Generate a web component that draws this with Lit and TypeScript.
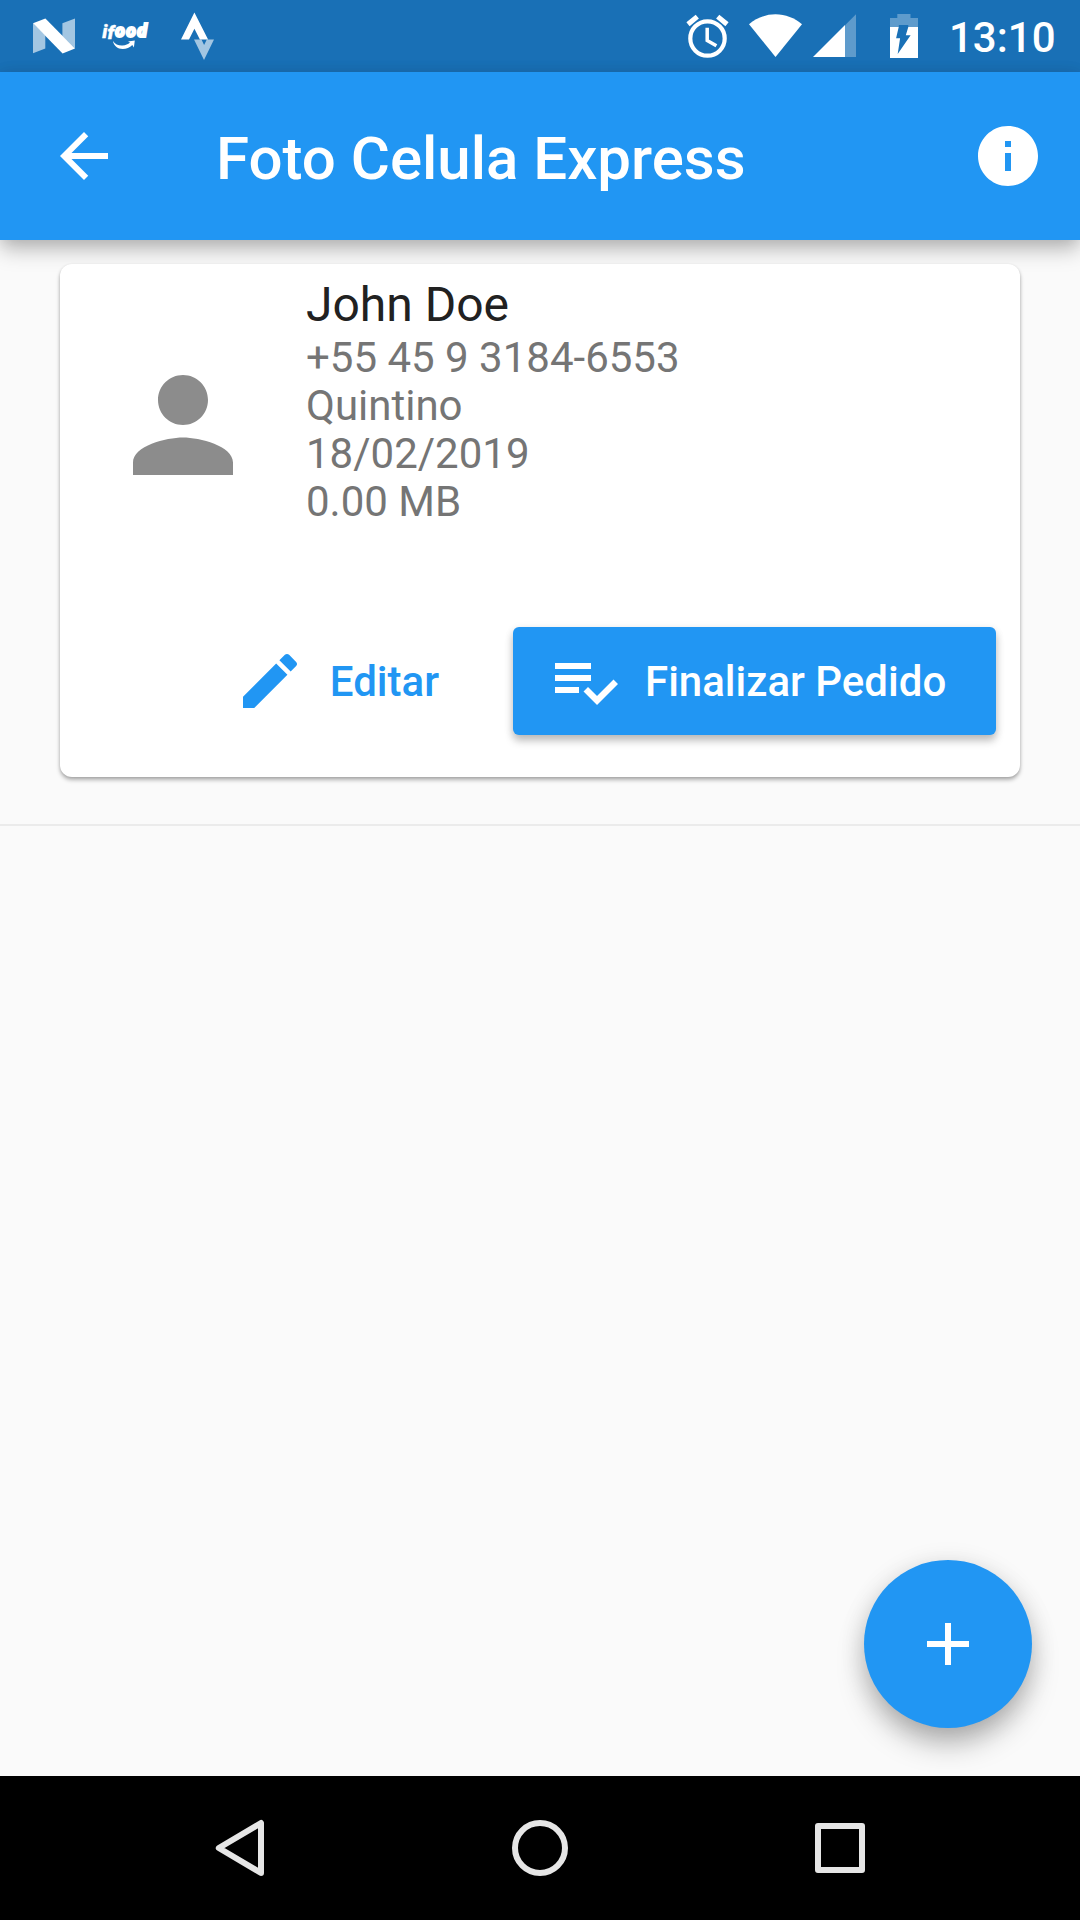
import { LitElement, html, css, svg } from "lit";
import { customElement, property } from "lit/decorators.js";

const paths: Record<string, string> = {
  back: "M20 11H7.83l5.59-5.59L12 4l-8 8 8 8 1.41-1.41L7.83 13H20v-2z",
  info: "M12 2C6.48 2 2 6.48 2 12s4.48 10 10 10 10-4.48 10-10S17.52 2 12 2zm1 15h-2v-6h2v6zm0-8h-2V7h2v2z",
  person: "M12 12c2.21 0 4-1.79 4-4s-1.79-4-4-4-4 1.79-4 4 1.79 4 4 4zm0 2c-2.67 0-8 1.34-8 4v2h16v-2c0-2.66-5.33-4-8-4z",
  edit: "M3 17.25V21h3.75L17.81 9.94l-3.75-3.75L3 17.25zM20.71 7.04c.39-.39.39-1.02 0-1.41l-2.34-2.34c-.39-.39-1.02-.39-1.41 0l-1.83 1.83 3.75 3.75 1.83-1.83z",
  check: "M14 10H2v2h12v-2zm0-4H2v2h12V6zM2 16h8v-2H2v2zm19.5-4.5L23 13l-6.99 7-4.51-4.5L13 14l3.01 3 5.49-5.5z",
  add: "M19 13h-6v6h-2v-6H5v-2h6V5h2v6h6v2z",
};

@customElement("md-icon")
export class MdIcon extends LitElement {
  @property() name = "";
  static styles = css`
    :host { display: block; width: 72px; height: 72px; flex: none; }
    .icon { display: block; width: 100%; height: 100%; fill: currentColor; }
  `;
  render() {
    return html`<svg class="icon" viewBox="0 0 24 24">${svg`<path d=${paths[this.name]}></path>`}</svg>`;
  }
}

@customElement("status-bar")
export class StatusBar extends LitElement {
  static styles = css`
    :host { display: flex; height: 72px; padding: 0 24.5px 0 32px; background: #1970b6; color: #fff; align-items: center; box-sizing: border-box; }
    .group { display: flex; align-items: center; }
    .left { gap: 24px; flex: 1; }
    .glyph { display: block; height: 72px; fill: #fff; flex: none; }
    .soft { fill-opacity: 0.6; }
    .faint { fill-opacity: 0.3; }
    .line { fill: none; stroke: #fff; }
    .brand { font: italic 900 20px Roboto, sans-serif; }
    .thin { font-weight: 900; font-size: 19px; stroke: #fff; stroke-width: 0.4px; }
    .round { stroke: #fff; stroke-width: 2px; font-size: 17.5px; }
    .wifi { margin-left: 19px; }
    .cell { margin-left: 10px; }
    .battery { margin-left: 33px; }
    .clock { font: 500 42px/72px Roboto, sans-serif; margin-left: 30.5px; height: 72px; padding-top: 2px; box-sizing: border-box; white-space: nowrap; }
  `;
  render() {
    return html`
      <div class="group left">
        <svg class="glyph" width="44" height="72" viewBox="32 0 44 72">
          <path class="soft" d="M33 23.3l12.3 12.3v12.9L33 53.3zM62.4 23.2L75 18.4v30L62.4 36z"></path>
          <path d="M33 23.2l12.400-4.800L75 48.400l-12.400 5z"></path>
        </svg>
        <svg class="glyph" width="56" height="72" viewBox="100 0 56 72">
          <text class="brand" y="37.500"><tspan class="thin" x="102.300 107.600" dy="0 1.500">if</tspan><tspan class="round" x="115.300 126.300 137.200" dy="-1.800">ood</tspan></text>
          <path d="M113 41c2 3.300 5.500 4.800 9.500 4.600 3.200-.2 5.600-1.200 7.500-3l-2-1.100 6.800-1.100-.9 7-1.600-2.400c-2.600 2.600-5.900 4-9.600 4-5.200 0-9-3.400-9.700-8z"></path>
        </svg>
        <svg class="glyph" width="36" height="72" viewBox="180 0 36 72">
          <path d="M194.400 12.500l13.700 27h-8.200l-5.500-10.700-5.400 10.700H181z"></path>
          <path class="soft" d="M194 39.500h7.500l2.600 5.500 2.700-5.500h7.200l-10 20.500z"></path>
        </svg>
      </div>
      <div class="group">
        <svg class="glyph" width="44" height="72" viewBox="686 0 44 72">
          <circle class="line" cx="707.500" cy="38.500" r="17.200" stroke-width="4.200"></circle>
          <path class="line" stroke-width="5" d="M688 24.300l9.300-7.700M727 24.300l-9.300-7.700"></path>
          <path class="line" stroke-width="3.500" d="M707.200 27.700v12.800l9.200 5.200"></path>
        </svg>
        <svg class="glyph wifi" width="54" height="72" viewBox="749 0 54 72">
          <path d="M775.500 57L749 24.200c7.400-6.100 16.600-9.900 26.500-9.900s19.100 3.800 26.500 9.900z"></path>
        </svg>
        <svg class="glyph cell" width="44" height="72" viewBox="813 0 44 72">
          <path class="faint" d="M845 25.300l11-11V57h-11z"></path>
          <path d="M813 57l32-32v32z"></path>
        </svg>
        <svg class="glyph battery" width="28" height="72" viewBox="890 0 28 72">
          <path class="faint" d="M890 18h7.300v-4h13.200v4H918v9h-9.700v-2h-9.500v2H890z"></path>
          <path fill-rule="evenodd" d="M890 27h28v31h-28zM898.700 27h9.600l-2.500 8.300h4.800L897.700 54l2.400-15.700h-4z"></path>
        </svg>
        <span class="clock">13:10</span>
      </div>
    `;
  }
}

@customElement("order-card")
export class OrderCard extends LitElement {
  static styles = css`
    :host { display: flex; flex-direction: column; justify-content: space-between; height: 513px; box-sizing: border-box; padding: 13px 24px 42px 48px; background: #fff; border-radius: 12px; box-shadow: 0 3px 4px rgba(0, 0, 0, 0.28), 0 1px 3px rgba(0, 0, 0, 0.12); }
    .tile { display: flex; gap: 48px; }
    .avatar { width: 150px; height: 150px; margin-top: 73px; color: #8c8c8c; }
    .name { font-size: 48px; line-height: 56px; color: #212121; margin-bottom: 1px; }
    .line { font-size: 42px; line-height: 48px; color: #757575; }
    .actions { display: flex; justify-content: flex-end; }
    .btn { display: flex; align-items: center; height: 108px; box-sizing: border-box; gap: 24px; padding: 0 48px 0 36px; border-radius: 6px; font-size: 42px; font-weight: 500; white-space: nowrap; }
    .flat { color: #2196f3; margin-right: 26px; }
    .raised { width: 483px; color: #fff; background: #2196f3; box-shadow: 0 6px 8px rgba(0, 0, 0, 0.22), 0 2px 8px rgba(0, 0, 0, 0.1); }
  `;
  render() {
    return html`
      <div class="tile">
        <md-icon class="avatar" name="person"></md-icon>
        <div>
          <div class="name">John Doe</div>
          ${["+55 45 9 3184-6553", "Quintino", "18/02/2019", "0.00 MB"].map((t) => html`<div class="line">${t}</div>`)}
        </div>
      </div>
      <div class="actions">
        <div class="btn flat"><md-icon name="edit"></md-icon><span>Editar</span></div>
        <div class="btn raised"><md-icon name="check"></md-icon><span>Finalizar Pedido</span></div>
      </div>
    `;
  }
}

@customElement("app-root")
export class AppRoot extends LitElement {
  static styles = css`
    :host { display: flex; flex-direction: column; width: 1080px; height: 1920px; overflow: hidden; background: #fafafa; font-family: Roboto, sans-serif; }
    .bar { display: flex; align-items: center; height: 168px; flex: none; box-sizing: border-box; padding: 0 36px 0 48px; color: #fff; background: #2196f3; box-shadow: 0 10px 20px -1px rgba(0, 0, 0, 0.27), 0 1px 14px rgba(0, 0, 0, 0.08); }
    .title { flex: 1; margin: 0 0 0 96px; padding-top: 5px; font-size: 60px; line-height: 70px; font-weight: 500; }
    .body { position: relative; flex: 1; }
    .entry { padding: 24px 60px 47px; border-bottom: 2px solid #ebebeb; }
    .fab { position: absolute; right: 48px; bottom: 48px; width: 168px; height: 168px; display: flex; align-items: center; justify-content: center; border-radius: 50%; color: #fff; background: #2196f3; box-shadow: 0 18px 30px -3px rgba(0, 0, 0, 0.28), 0 4px 26px rgba(0, 0, 0, 0.12); }
    .nav { display: flex; align-items: center; justify-content: space-between; height: 144px; flex: none; box-sizing: border-box; padding: 0 210px; background: #000; }
    .key { display: block; width: 60px; height: 60px; fill: none; stroke: #e6e6e6; stroke-width: 6; stroke-linejoin: round; }
  `;
  render() {
    return html`
      <status-bar></status-bar>
      <header class="bar">
        <md-icon name="back"></md-icon>
        <h1 class="title">Foto Celula Express</h1>
        <md-icon name="info"></md-icon>
      </header>
      <main class="body">
        <div class="entry"><order-card></order-card></div>
        <div class="fab"><md-icon name="add"></md-icon></div>
      </main>
      <nav class="nav">
        <svg class="key" viewBox="0 0 60 60"><path d="M51 5v50L8.800 30z"></path></svg>
        <svg class="key" viewBox="0 0 60 60"><circle cx="30" cy="30" r="25"></circle></svg>
        <svg class="key" viewBox="0 0 60 60"><rect x="8" y="8" width="44" height="44"></rect></svg>
      </nav>
    `;
  }
}
